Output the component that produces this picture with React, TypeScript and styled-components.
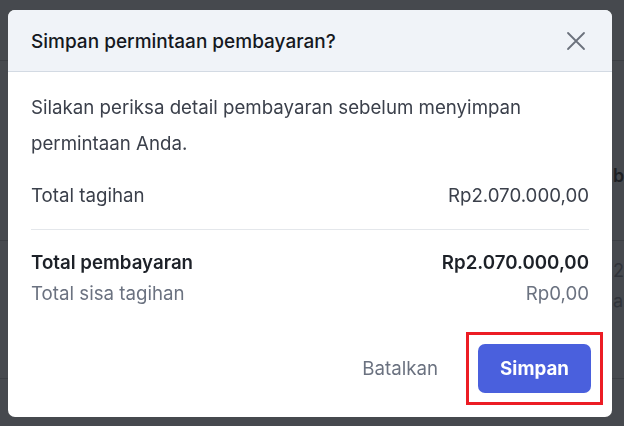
import React from 'react'
import styled, { createGlobalStyle } from 'styled-components'

const GlobalStyle = createGlobalStyle`
  html, body {
    margin: 0;
    padding: 0;
    height: 100%;
    background: #46494e;
    font-family: Inter, "Noto Sans", sans-serif;
    -webkit-font-smoothing: antialiased;
  }
  #root {
    height: 100%;
  }
`

// page behind the dialog, dimmed
const Page = styled.div`
  display: flex;
  flex-direction: column;
  height: 426px;
  overflow: hidden;
  background: #46494e;
`

const PageRow = styled.div<{ $h: number }>`
  height: ${({ $h }) => $h}px;
  border-bottom: 1px solid #3c3f44;
  display: flex;
  flex-direction: column;
  padding-left: 613px;
  box-sizing: border-box;
  white-space: nowrap;
  font-size: 18px;
`

const PageText = styled.div<{ $top: number; $bold?: boolean }>`
  margin-top: ${({ $top }) => $top}px;
  line-height: 24px;
  color: ${({ $bold }) => ($bold ? '#1e2024' : '#30333a')};
  font-weight: ${({ $bold }) => ($bold ? 600 : 400)};
`

const Overlay = styled.div`
  position: fixed;
  inset: 0;
  display: flex;
  align-items: flex-start;
  justify-content: flex-start;
  padding: 10px 0 0 8px;
`

const Dialog = styled.div`
  width: 604px;
  height: 407px;
  background: #fff;
  border-radius: 7px;
  overflow: hidden;
  display: flex;
  flex-direction: column;
  box-sizing: border-box;
`

const Header = styled.div`
  height: 62px;
  flex-shrink: 0;
  background: #f0f3f8;
  border-bottom: 1px solid #d3dae3;
  box-sizing: border-box;
  display: flex;
  align-items: center;
  justify-content: space-between;
  padding: 1px 24px 0 23px;
`

const Title = styled.h2`
  margin: 0;
  font-size: 19px;
  font-weight: 500;
  color: #15181e;
`

const CloseButton = styled.button`
  border: 0;
  background: transparent;
  padding: 0;
  width: 24px;
  height: 24px;
  display: flex;
  align-items: center;
  justify-content: center;
  color: #6b717c;
  cursor: pointer;
`

const Body = styled.div`
  display: flex;
  flex-direction: column;
  padding: 18px 23px 0 23px;
`

const Description = styled.p`
  margin: 0 0 22px;
  max-width: 500px;
  font-size: 18.7px;
  line-height: 36px;
  color: #3b404b;
`

const Row = styled.div<{ $bold?: boolean; $muted?: boolean }>`
  display: flex;
  justify-content: space-between;
  font-size: 18.7px;
  line-height: 24px;
  font-weight: ${({ $bold }) => ($bold ? 600 : 400)};
  color: ${({ $bold, $muted }) => ($bold ? '#1d2128' : $muted ? '#6b7280' : '#3b404b')};
  & + & {
    margin-top: 7px;
  }
`

const Divider = styled.hr`
  margin: 21px 0 21px;
  border: 0;
  border-top: 1px solid #e4e7eb;
`

const Footer = styled.div`
  margin-top: auto;
  display: flex;
  justify-content: flex-end;
  align-items: center;
  gap: 28px;
  padding: 0 9px 12px 0;
`

const TextButton = styled.button`
  border: 0;
  background: transparent;
  padding: 0;
  font-family: inherit;
  font-size: 18.7px;
  color: #6b7280;
  cursor: pointer;
`

const Highlight = styled.span`
  display: inline-flex;
  border: 3px solid #ec1c24;
  padding: 9px;
`

const PrimaryButton = styled.button`
  width: 113px;
  height: 49px;
  border: 0;
  border-radius: 7px;
  background: #4a60dd;
  color: #fff;
  font-family: inherit;
  font-size: 18.7px;
  font-weight: 700;
  cursor: pointer;
`

export default function App() {
  return (
    <>
      <GlobalStyle />
      <Page>
        <PageRow $h={61} />
        <PageRow $h={180}>
          <PageText $top={103} $bold>b</PageText>
        </PageRow>
        <PageRow $h={138}>
          <PageText $top={18}>24</PageText>
          <PageText $top={6}>a</PageText>
        </PageRow>
      </Page>
      <Overlay>
        <Dialog role="dialog">
          <Header>
            <Title>Simpan permintaan pembayaran?</Title>
            <CloseButton aria-label="Tutup">
              <svg width="20" height="20" viewBox="0 0 20 20" fill="none" stroke="currentColor" strokeWidth="1.8" strokeLinecap="round">
                <path d="M2 2 L18 18 M18 2 L2 18" />
              </svg>
            </CloseButton>
          </Header>
          <Body>
            <Description>
              Silakan periksa detail pembayaran sebelum menyimpan permintaan Anda.
            </Description>
            <Row>
              <span>Total tagihan</span>
              <span>Rp2.070.000,00</span>
            </Row>
            <Divider />
            <Row $bold>
              <span>Total pembayaran</span>
              <span>Rp2.070.000,00</span>
            </Row>
            <Row $muted>
              <span>Total sisa tagihan</span>
              <span>Rp0,00</span>
            </Row>
          </Body>
          <Footer>
            <TextButton>Batalkan</TextButton>
            <Highlight>
              <PrimaryButton>Simpan</PrimaryButton>
            </Highlight>
          </Footer>
        </Dialog>
      </Overlay>
    </>
  )
}
